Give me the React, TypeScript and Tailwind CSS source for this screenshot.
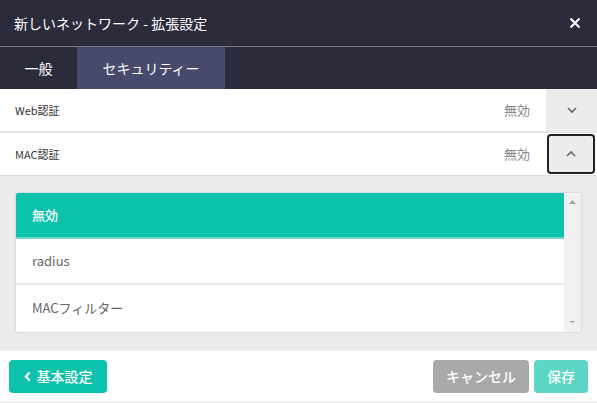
import React from 'react';

const font = { fontFamily: '"Noto Sans CJK JP", Roboto, sans-serif' };

const ChevronDown = () => (
  <svg width="12" height="8" viewBox="0 0 12 8" fill="none">
    <path d="M2 2l4 4 4-4" stroke="#666" strokeWidth="1.6" />
  </svg>
);

const ChevronUp = () => (
  <svg width="12" height="8" viewBox="0 0 12 8" fill="none">
    <path d="M2 6l4-4 4 4" stroke="#666" strokeWidth="1.6" />
  </svg>
);

const SettingRow = ({ label, value, open }: { label: string; value: string; open?: boolean }) => (
  <div className="flex h-[42px] items-center bg-white">
    <div className="flex-1 pl-[15px] text-[11px] text-[#333]">{label}</div>
    <div className="pr-[16px] text-[13px] text-[#888]">{value}</div>
    {open ? (
      <div className="flex h-full w-[51px] items-center justify-center p-[1px] pr-[2px]">
        <div className="flex h-full w-full items-center justify-center rounded-[4px] border-2 border-[#222] bg-[#ececec]">
          <ChevronUp />
        </div>
      </div>
    ) : (
      <div className="flex h-full w-[51px] items-center justify-center bg-[#ececec]">
        <ChevronDown />
      </div>
    )}
  </div>
);

const App = () => {
  const options = [
    { id: '1', label: '無効', selected: true },
    { id: '2', label: 'radius' },
    { id: '3', label: 'MACフィルター' },
  ];

  return (
    <div className="flex h-[403px] w-[597px] flex-col bg-[#ebebeb]" style={font}>
      <div className="flex h-[46px] items-center justify-between bg-[#2b2b3c] pl-[14px] pr-[16px]">
        <div className="text-[14px] text-white">新しいネットワーク - 拡張設定</div>
        <svg width="12" height="12" viewBox="0 0 12 12">
          <path d="M1.5 1.5l9 9M10.5 1.5l-9 9" stroke="#fff" strokeWidth="2" />
        </svg>
      </div>
      <div className="h-[1px] bg-[#7a7a86]" />
      <div className="flex h-[42px] bg-[#2b2b3c] text-[14px] text-white">
        <div className="flex w-[77px] items-center justify-center">一般</div>
        <div className="flex w-[148px] items-center justify-center bg-[#474a6a]">セキュリティー</div>
      </div>
      <SettingRow label="Web認証" value="無効" />
      <div className="h-[2px] bg-[#e6e6e6]" />
      <SettingRow label="MAC認証" value="無効" open />
      <div className="h-[1px] bg-[#dcdcdc]" />
      <div className="flex-1 px-[15px] pt-[16px]">
        <div className="flex h-[141px] overflow-hidden rounded-[3px] border border-[#dadada] bg-white">
          <div className="flex flex-1 flex-col">
            {options.map((o) => (
              <div
                key={o.id}
                className={
                  o.selected
                    ? 'flex h-[46px] items-center border-b-2 border-[#6fd6c8] bg-[#0dc2ac] pl-[16px] text-[13px] font-medium text-white'
                    : 'flex h-[46px] items-center border-b-2 border-[#e8e8e8] pl-[16px] text-[13px] text-[#666] last:border-b-0'
                }
              >
                {o.label}
              </div>
            ))}
          </div>
          <div className="flex w-[17px] flex-col items-center justify-between bg-[#f1f1f1] py-[7px]">
            <svg width="7" height="4" viewBox="0 0 7 4">
              <path d="M0 4L3.5 0 7 4z" fill="#a3a3a3" />
            </svg>
            <svg width="5" height="4" viewBox="0 0 5 4">
              <path d="M0 0h5v1H3L2.5 4 2 1H0z" fill="#a3a3a3" />
            </svg>
          </div>
        </div>
      </div>
      <div className="flex h-[52px] items-center justify-between border-b-2 border-[#eeeeee] bg-white px-[9px] pt-[1px]">
        <button className="flex h-[33px] w-[98px] items-center justify-center gap-[6px] rounded-[4px] bg-[#0dc2ac] text-[14px] font-medium text-white">
          <svg width="7" height="11" viewBox="0 0 7 11">
            <path d="M5.5 1.5L2 5.5l3.5 4" stroke="#fff" strokeWidth="2.4" fill="none" />
          </svg>
          基本設定
        </button>
        <div className="flex gap-[5px]">
          <button className="flex h-[33px] w-[96px] items-center justify-center rounded-[4px] bg-[#a9a9a9] text-[14px] font-medium text-white">
            キャンセル
          </button>
          <button className="flex h-[33px] w-[54px] items-center justify-center rounded-[4px] bg-[#5ed6c6] text-[14px] font-medium text-white">
            保存
          </button>
        </div>
      </div>
    </div>
  );
};

export default App;
